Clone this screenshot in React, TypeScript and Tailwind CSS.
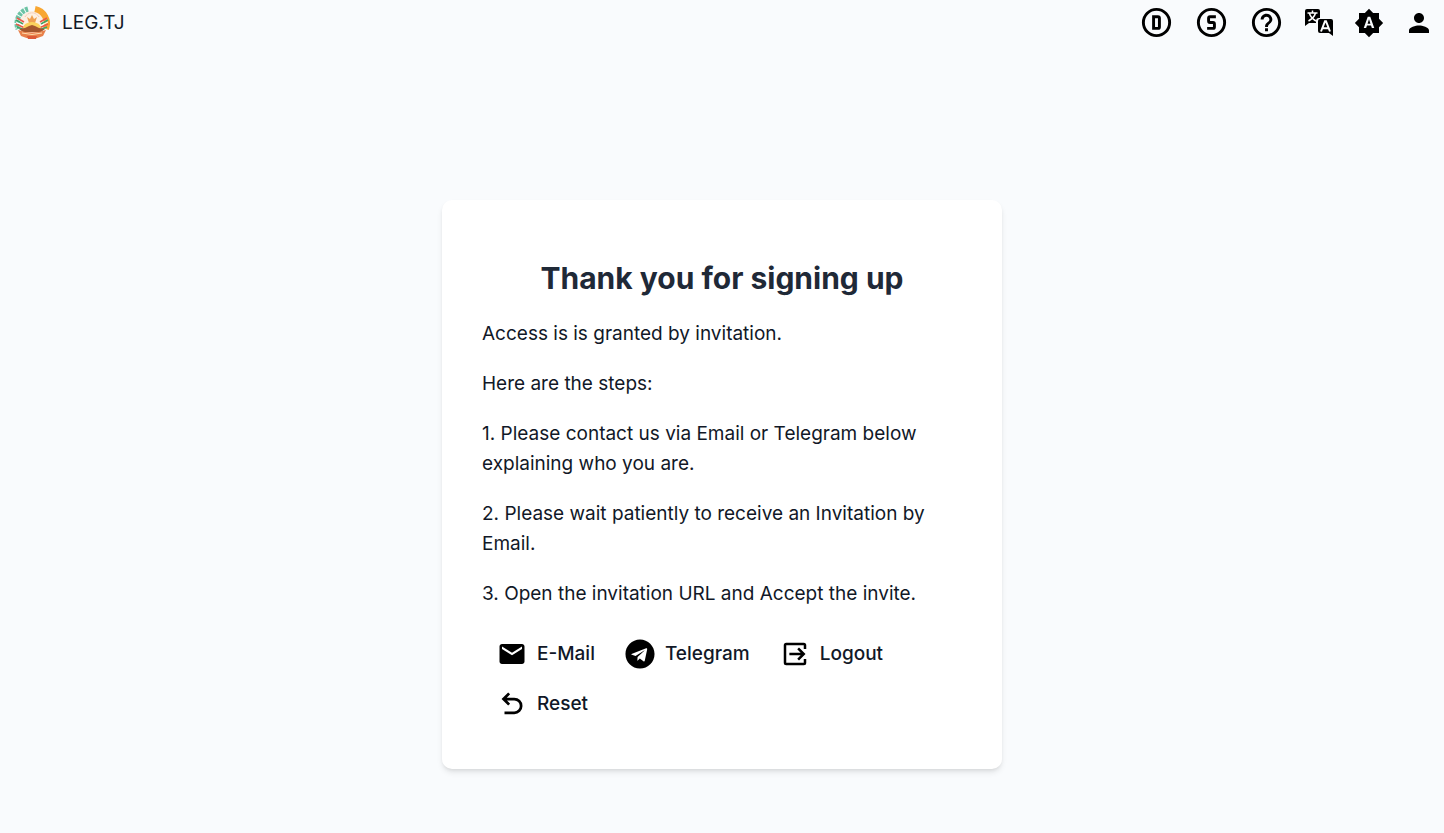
import type { ReactNode } from "react";
import { FaTelegram } from "react-icons/fa";
import { MdBrightnessAuto, MdEmail, MdHelpOutline, MdPerson } from "react-icons/md";

const ring =
  "M12 20a8 8 0 0 1-8-8 8 8 0 0 1 8-8 8 8 0 0 1 8 8 8 8 0 0 1-8 8m0-18A10 10 0 0 0 2 12a10 10 0 0 0 10 10 10 10 0 0 0 10-10A10 10 0 0 0 12 2";

function LetterD() {
  return (
    <svg viewBox="0 0 24 24" className="size-[35px]" fill="currentColor">
      <path d={ring} />
      <path d="M9 7v10h4a2 2 0 0 0 2-2V9a2 2 0 0 0-2-2H9m2 2h2v6h-2V9" />
    </svg>
  );
}

function LetterS() {
  return (
    <svg viewBox="0 0 24 24" className="size-[35px]" fill="currentColor">
      <path d={ring} />
      <path d="M11 7a2 2 0 0 0-2 2v2a2 2 0 0 0 2 2h2v2H9v2h4a2 2 0 0 0 2-2v-2a2 2 0 0 0-2-2h-2V9h4V7h-4z" />
    </svg>
  );
}

function Translate() {
  return (
    <svg viewBox="0 0 28 28" className="size-7">
      <path d="M2 0h11a2 2 0 0 1 2 2v7h-1a3 3 0 0 0-3 3v2H4l-4 3V2a2 2 0 0 1 2-2z" fill="currentColor" />
      <path d="M15 10h11a2 2 0 0 1 2 2v15l-4-3h-9a2 2 0 0 1-2-2V12a2 2 0 0 1 2-2z" fill="currentColor" />
      <path d="M2.500 4h10M7.500 1.500V4M10.500 4c-1 4-3.500 6-7 8M4.500 4.500c1 3.500 3 5.500 6.500 7.500" stroke="white" strokeWidth="1.500" fill="none" />
      <path d="M16 22.500l4-10.300h1l4 10.300M17.500 19.200h6" stroke="white" strokeWidth="2" fill="none" />
    </svg>
  );
}

function Exit() {
  return (
    <svg
      viewBox="0 0 24 24"
      className="size-[30px] text-black"
      fill="none"
      stroke="currentColor"
      strokeWidth="2"
    >
      <path d="M20 8V5a1 1 0 0 0-1-1H5a1 1 0 0 0-1 1v14a1 1 0 0 0 1 1h14a1 1 0 0 0 1-1v-3M7.500 12h11.500M14.500 7.500 19 12l-4.500 4.500" />
    </svg>
  );
}

function Undo() {
  return (
    <svg
      viewBox="0 0 24 24"
      className="size-[30px] text-black"
      fill="none"
      stroke="currentColor"
      strokeWidth="2.200"
    >
      <path d="M9.700 3.500 5.200 8l4.500 4.500M5.200 8h8.600a5.500 5.500 0 0 1 0 11H6" />
    </svg>
  );
}

function Emblem() {
  return (
    <svg viewBox="0 0 36 36" className="size-9">
      <circle cx="18" cy="18" r="12" fill="#fdf0e2" />
      <g fill="none">
        <path d="M14 4A15 15 0 0 0 4 24" stroke="#6cc3a4" strokeWidth="5" strokeDasharray="3 1" />
        <path d="M21 4a15 15 0 0 1 11 20" stroke="#f8a733" strokeWidth="6" />
        <path d="m2 15 7 4M3 22l8 3M34 15l-7 4M33 22l-8 3" stroke="#3fa56a" strokeWidth="1.500" />
        <path d="m3 13 7 4M2 19l9 4M33 13l-7 4M34 19l-9 4" stroke="#e8594a" strokeWidth="1.500" />
        <path d="m2 17 8 4M34 17l-8 4" stroke="#ffffff" strokeWidth="1" />
        <path d="M11 12a8 8 0 0 1 14 0" stroke="#f3b199" strokeWidth="1" strokeDasharray="1 1" />
      </g>
      <path d="m13 12 3 2 2-4 2 4 3-2-2 6h-6z" fill="#efa052" />
      <path d="M9 23a9 6 0 0 1 18 0z" fill="#fbd25e" />
      <path d="m5 24 6-1 4-2 3-1 3 1 4 2 6 1-4 3H9z" fill="#a4562d" />
      <path d="M4 25q14 5 28 0l-3 6q-11 5-22 0z" fill="#e8804a" />
      <path d="M8 28q10 3 20 0" stroke="#ffdcae" strokeWidth="1" fill="none" />
      <path d="M13 31h10l-1 3h-8z" fill="#dc5a38" />
    </svg>
  );
}

function IconButton({ label, children, wide }: { label: string; children: ReactNode; wide?: boolean }) {
  return (
    <button
      type="button"
      aria-label={label}
      className={wide ? "flex w-[55px] items-center justify-center" : "flex w-[50px] items-center justify-center"}
    >
      {children}
    </button>
  );
}

function Action({ label, children }: { label: string; children: ReactNode }) {
  return (
    <button type="button" className="flex h-[50px] items-center gap-[10px] px-[15px] font-medium">
      {children}
      {label}
    </button>
  );
}

export default function App() {
  return (
    <div className="flex min-h-screen flex-col bg-[#f9fbfd] font-['Inter',sans-serif] text-[19px] leading-[30px] text-[#111827]">
      <header className="flex h-[45px] items-center justify-between pl-[14px] text-black">
        <a href="#" className="flex items-center gap-3 text-[#111827]">
          <Emblem />
          LEG.TJ
        </a>
        <nav className="flex h-full">
          <IconButton label="Documents" wide><LetterD /></IconButton>
          <IconButton label="Search" wide><LetterS /></IconButton>
          <IconButton label="Help" wide><MdHelpOutline className="size-[35px]" /></IconButton>
          <IconButton label="Language"><Translate /></IconButton>
          <IconButton label="Theme"><MdBrightnessAuto className="size-[30px]" /></IconButton>
          <IconButton label="Account"><MdPerson className="size-[30px]" /></IconButton>
        </nav>
      </header>
      <main className="flex grow items-center justify-center pt-[105px] pb-[14px]">
        <section className="w-full max-w-[560px] rounded-[10px] bg-white px-10 pt-[60px] pb-10 shadow-md">
          <h1 className="text-center text-[30px] leading-9 font-bold text-[#1f2937]">
            Thank you for signing up
          </h1>
          <div className="mt-[23px] flex flex-col gap-5">
            <p>Access is is granted by invitation.</p>
            <p>Here are the steps:</p>
            <p>1. Please contact us via Email or Telegram below explaining who you are.</p>
            <p>2. Please wait patiently to receive an Invitation by Email.</p>
            <p>3. Open the invitation URL and Accept the invite.</p>
          </div>
          <div className="mt-5 flex flex-wrap">
            <Action label="E-Mail"><MdEmail className="size-[30px] text-black" /></Action>
            <Action label="Telegram"><FaTelegram className="size-[30px] text-black" /></Action>
            <Action label="Logout"><Exit /></Action>
            <Action label="Reset"><Undo /></Action>
          </div>
        </section>
      </main>
    </div>
  );
}
